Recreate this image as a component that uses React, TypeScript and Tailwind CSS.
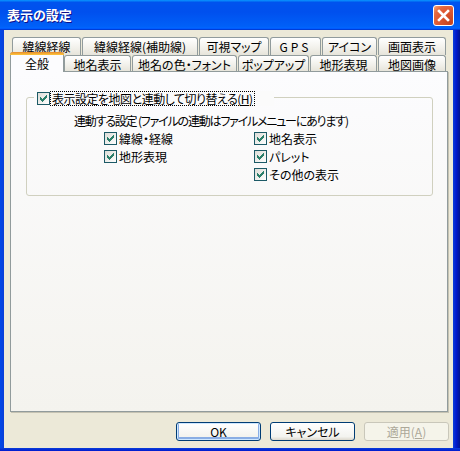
import React from "react";

const backTabs = [
  { label: "緯線経線", w: "w-[69px]" },
  { label: "緯線経線(補助線)", w: "w-[116px]" },
  { label: "可視マップ", w: "w-[70px]" },
  { label: "GPS", w: "w-[51px]", cls: "tracking-[3px]" },
  { label: "アイコン", w: "w-[55px]" },
  { label: "画面表示", w: "w-[68px]" },
];

const frontTabs = [
  { label: "地名表示", w: "w-[67px]", m: "ml-0" },
  { label: "地名の色・フォント", w: "w-[105px]", m: "ml-[1px]" },
  { label: "ポップアップ", w: "w-[71px]", m: "ml-[1px]" },
  { label: "地形表現", w: "w-[67px]", m: "ml-[1px]" },
  { label: "地図画像", w: "w-[68px]", m: "ml-[1px]" },
];

const Check = () => (
  <span className="w-[13px] h-[13px] shrink-0 border border-[#1C5A66] bg-[linear-gradient(135deg,#DCDCD7,#FFFFFF)] flex items-center justify-center">
    <svg width="11" height="11" viewBox="0 0 11 11" shapeRendering="crispEdges">
      <path d="M2 4h1v1h1v1h1V5h1V4h1V3h1V2h1v3H8v1H7v1H6v1H5v1H4V8H3V7H2z" fill="#2A7F6A" />
    </svg>
  </span>
);

const CheckItem = ({ label }: { label: string }) => (
  <div className="flex items-center gap-[2px] h-[13px]">
    <Check />
    <span className="leading-[13px]">{label}</span>
  </div>
);

const Button = ({ children, kind }: { children: React.ReactNode; kind?: "default" | "disabled" }) => {
  if (kind === "disabled") {
    return (
      <div className="w-[85px] h-[19px] rounded-[3px] border border-[#C9C7BA] bg-[#F5F4EA] text-[#ACA899] flex items-center justify-center leading-none">
        {children}
      </div>
    );
  }
  return (
    <div
      className={
        kind === "default"
          ? "w-[85px] h-[19px] rounded-[3px] border border-[#003C74] bg-[linear-gradient(to_bottom,#FFFFFF,#F3F3EF_80%,#DCD8CD)] shadow-[inset_0_0_0_1px_#CEE7FF,inset_0_-1px_0_2px_#89ADE4] flex items-center justify-center leading-none"
          : "w-[85px] h-[19px] rounded-[3px] border border-[#003C74] bg-[linear-gradient(to_bottom,#FFFFFF,#F3F3EF_80%,#DCD8CD)] flex items-center justify-center leading-none"
      }
    >
      {children}
    </div>
  );
};

export default function App() {
  return (
    <div className="w-[460px] h-[451px] flex flex-col bg-[#0831D9] text-[12px] text-black font-['Noto_Sans_CJK_JP','Noto_Sans',sans-serif] [font-feature-settings:'palt'] select-none">
      {/* title bar */}
      <div className="h-[30px] shrink-0 flex items-start bg-[linear-gradient(to_bottom,#0997FF,#0053EE_8%,#0050EE_40%,#0060F8_88%,#0066FF_93%,#005BFF_95%,#003DD7_96%,#003DD7)]">
        <span className="mt-[6px] ml-[7px] text-white font-bold text-[13px] leading-[17px] [text-shadow:1px_1px_#0F1089]">
          表示の設定
        </span>
        <div className="ml-auto mr-[6px] mt-[5px] w-[21px] h-[21px] rounded-[3px] border border-white bg-[radial-gradient(circle_at_85%_85%,#C8441E_0%,#E05A35_55%,#E46A40_75%,#F6A57A_100%)] flex items-center justify-center">
          <svg width="13" height="13" viewBox="0 0 13 13">
            <path d="M2 2L11 11M11 2L2 11" stroke="white" strokeWidth="2.6" strokeLinecap="square" />
          </svg>
        </div>
      </div>

      <div className="flex flex-1">
        <div className="w-[4px] bg-[linear-gradient(to_right,#0048E8,#0A3FD8)]" />

        {/* body */}
        <div className="flex-1 bg-[#ECE9D8] flex flex-col pt-[7px] pl-[6px]">
          {/* back row tabs */}
          <div className="flex gap-[1px] pl-[2px] h-[18px]">
            {backTabs.map((t) => (
              <div
                key={t.label}
                className={`${t.w} h-[18px] rounded-t-[3px] border border-b-0 border-[#919B9C] bg-[linear-gradient(to_bottom,#FFFFFF,#F1F0EA_60%,#E6E4DA)] flex justify-center pt-[2px] leading-[13px]`}
              >
                <span className={t.cls ?? ""}>{t.label}</span>
              </div>
            ))}
          </div>

          {/* front row tabs */}
          <div className="flex items-start pl-[2px] h-[16px]">
            <div className="relative z-10 -ml-[2px] -mt-[3px] w-[54px] h-[20px] rounded-t-[3px] border-x border-[#919B9C] bg-[#FCFCFE] flex flex-col">
              <div className="h-[3px] -mx-[1px] rounded-t-[3px] bg-[linear-gradient(to_bottom,#E68B2C,#FFC73C)]" />
              <div className="flex justify-center pt-[2px] leading-[13px]">全般</div>
            </div>
            {frontTabs.map((t) => (
              <div
                key={t.label}
                className={`${t.w} ${t.m} h-[16px] rounded-t-[3px] border border-b-0 border-[#919B9C] bg-[linear-gradient(to_bottom,#FFFFFF,#F1F0EA_60%,#E6E4DA)] flex justify-center pt-[2px] leading-[13px]`}
              >
                {t.label}
              </div>
            ))}
          </div>

          {/* panel */}
          <div className="w-[438px] h-[341px] border border-[#919B9C] shadow-[1px_1px_0_#C5C2B2] bg-[linear-gradient(to_bottom,#FCFCFE,#F4F3EE)]">
            <div className="relative mt-[25px] ml-[15px] w-[407px] h-[99px] rounded-[3px] border border-[#D0D0BF]">
              <div className="absolute -top-[7px] left-[7px] h-[15px] pl-[3px] pr-[19px] flex items-center bg-[#FBFBFB]">
                <Check />
                <span className="h-[15px] px-[1px] border border-dotted border-black leading-[13px] tracking-[-0.5px]">
                  表示設定を地図と連動して切り替える(<span className="underline">H</span>)
                </span>
              </div>

              <div className="mt-[16px] ml-[47px] h-[14px] leading-[14px] tracking-[-1.2px]">
                連動する設定 (ファイルの連動はファイルメニューにあります)
              </div>

              <div className="mt-[4px] ml-[77px] grid grid-cols-[150px_150px] gap-y-[5px]">
                <CheckItem label="緯線・経線" />
                <CheckItem label="地名表示" />
                <CheckItem label="地形表現" />
                <CheckItem label="パレット" />
                <div />
                <CheckItem label="その他の表示" />
              </div>
            </div>
          </div>

          {/* buttons */}
          <div className="mt-[10px] pr-[4px] flex justify-end gap-[9px]">
            <Button kind="default">OK</Button>
            <Button>キャンセル</Button>
            <Button kind="disabled">
              適用(<span className="underline">A</span>)
            </Button>
          </div>
        </div>

        <div className="w-[7px] bg-[linear-gradient(to_right,#0A3FD8,#0019CF_45%,#00138C)]" />
      </div>
      <div className="h-[3px] shrink-0 bg-[linear-gradient(to_bottom,#0A3FD8,#0019CF)]" />
    </div>
  );
}
